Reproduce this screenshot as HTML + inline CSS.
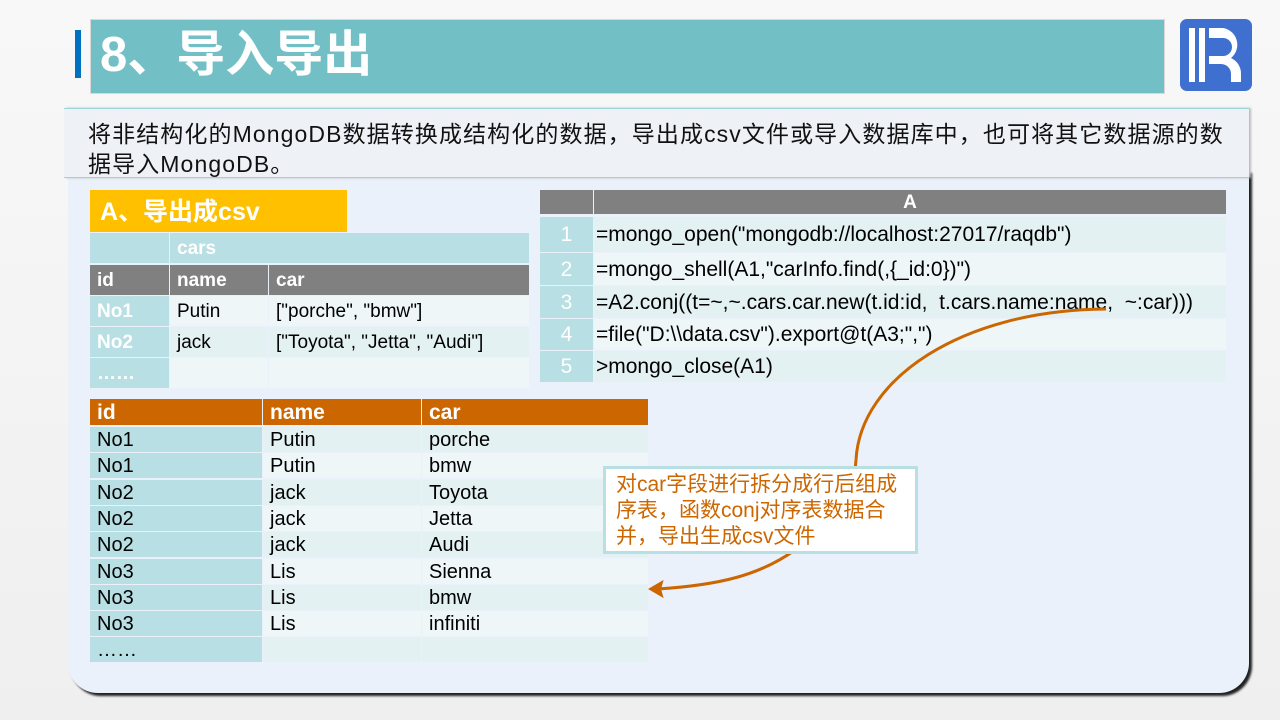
<!DOCTYPE html>
<html><head><meta charset="utf-8"><style>
*{margin:0;padding:0;box-sizing:border-box}
body{width:1280px;height:720px;overflow:hidden;background:linear-gradient(#f8f8f8,#efefef);font-family:"Liberation Sans","Noto Sans CJK SC",sans-serif;position:relative}
.a{position:absolute}
.c{position:absolute;font-size:19px;line-height:1;color:#000;padding-left:7px;display:flex;align-items:center;white-space:nowrap}
.b .c{font-size:20px}
.r .c{font-size:21px}
</style></head><body>
<div class="a" style="left:75px;top:30px;width:6px;height:48px;background:#0070c0"></div>
<div class="a" style="left:90px;top:19px;width:1075px;height:75px;background:#72bfc5;border:1px solid #d8d8d8"></div>
<div class="a" style="left:100px;top:22px;font-size:49px;font-weight:bold;color:#fff;line-height:66px;font-family:'Liberation Sans','Noto Sans CJK SC',sans-serif">8、导入导出</div>
<svg class="a" style="left:1179px;top:18px" width="74" height="74" viewBox="0 0 74 74">
<rect x="1" y="1" width="72" height="72" rx="7" fill="#3f6fcf"/>
<rect x="10" y="10" width="6" height="54" fill="#fff"/><rect x="20" y="10" width="6" height="54" fill="#fff"/>
<path d="M30 10 H44 A17 17 0 0 1 52 40 A17 17 0 0 1 62 56 V64 H52 V56 A10 10 0 0 0 42 46 H30 V38 H44 A9 9 0 0 0 44 20 H30 Z" fill="#fff"/>
</svg>
<div class="a" style="left:68px;top:170px;width:1181px;height:523px;background:#eaf1fb;border-radius:0 0 30px 30px;box-shadow:3px 3px 2px #222"></div>
<div class="a" style="left:64px;top:108px;width:1185px;height:70px;background:#eef1f5;border-top:1px solid #9fd3d8;border-bottom:1px solid #9fd3d8;box-shadow:2px 0 2px #bbb"></div>
<div class="a" style="left:88px;top:119px;font-size:23px;line-height:30px;color:#111;width:1180px;letter-spacing:1.1px;white-space:nowrap;font-family:'Liberation Sans','Noto Sans CJK SC',sans-serif">将非结构化的MongoDB数据转换成结构化的数据，导出成csv文件或导入数据库中，也可将其它数据源的数<br>据导入MongoDB。</div>

<div class="a" style="left:90px;top:190px;width:257px;height:42px;background:#ffc000;color:#fff;font-weight:bold;font-size:25px;line-height:44px;padding-left:10px">A、导出成csv</div>
<!-- left table -->
<div class="c" style="left:90px;top:233px;width:79px;height:30px;background:#b8dfe3"></div>
<div class="c" style="left:170px;top:233px;width:359px;height:30px;background:#b8dfe3;color:#fff;font-weight:bold">cars</div>
<div class="c" style="left:90px;top:265px;width:79px;height:30px;background:#808080;color:#fff;font-weight:bold">id</div>
<div class="c" style="left:170px;top:265px;width:98px;height:30px;background:#808080;color:#fff;font-weight:bold">name</div>
<div class="c" style="left:269px;top:265px;width:260px;height:30px;background:#808080;color:#fff;font-weight:bold">car</div>
<div class="c" style="left:90px;top:296px;width:79px;height:30px;background:#b8dfe3;color:#fff;font-weight:bold">No1</div>
<div class="c" style="left:170px;top:296px;width:98px;height:30px;background:#eef6f8">Putin</div>
<div class="c" style="left:269px;top:296px;width:260px;height:30px;background:#eef6f8">["porche", "bmw"]</div>
<div class="c" style="left:90px;top:327px;width:79px;height:30px;background:#b8dfe3;color:#fff;font-weight:bold">No2</div>
<div class="c" style="left:170px;top:327px;width:98px;height:30px;background:#e4f1f3">jack</div>
<div class="c" style="left:269px;top:327px;width:260px;height:30px;background:#e4f1f3">["Toyota", "Jetta", "Audi"]</div>
<div class="c" style="left:90px;top:358px;width:79px;height:30px;background:#b8dfe3;color:#fff;font-weight:bold">……</div>
<div class="c" style="left:170px;top:358px;width:98px;height:30px;background:#eef6f8"></div>
<div class="c" style="left:269px;top:358px;width:260px;height:30px;background:#eef6f8"></div>
<!-- right table -->
<div class="r">
<div class="c" style="left:540px;top:190px;width:53px;height:24px;background:#808080"></div>
<div class="c" style="left:594px;top:190px;width:632px;height:24px;background:#808080;color:#fff;font-weight:bold;justify-content:center;padding:0;font-size:19px">A</div>
<div class="c" style="left:540px;top:217px;width:53px;height:35px;background:#b8dfe3;color:#fff;justify-content:center;padding:0">1</div>
<div class="c" style="left:594px;top:217px;width:632px;height:35px;background:#e4f1f3;padding-left:2px">=mongo_open("mongodb://localhost:27017/raqdb")</div>
<div class="c" style="left:540px;top:253px;width:53px;height:32px;background:#b8dfe3;color:#fff;justify-content:center;padding:0">2</div>
<div class="c" style="left:594px;top:253px;width:632px;height:32px;background:#eef6f8;padding-left:2px">=mongo_shell(A1,"carInfo.find(,{_id:0})")</div>
<div class="c" style="left:540px;top:286px;width:53px;height:32px;background:#b8dfe3;color:#fff;justify-content:center;padding:0">3</div>
<div class="c" style="left:594px;top:286px;width:632px;height:32px;background:#e4f1f3;padding-left:2px">=A2.conj((t=~,~.cars.car.new(t.id:id,&nbsp; t.cars.name:name,&nbsp; ~:car)))</div>
<div class="c" style="left:540px;top:319px;width:53px;height:31px;background:#b8dfe3;color:#fff;justify-content:center;padding:0">4</div>
<div class="c" style="left:594px;top:319px;width:632px;height:31px;background:#eef6f8;padding-left:2px">=file("D:\\data.csv").export@t(A3;",")</div>
<div class="c" style="left:540px;top:351px;width:53px;height:31px;background:#b8dfe3;color:#fff;justify-content:center;padding:0">5</div>
<div class="c" style="left:594px;top:351px;width:632px;height:31px;background:#e4f1f3;padding-left:2px">&gt;mongo_close(A1)</div>
</div>
<!-- bottom table -->
<div class="b">
<div class="c" style="left:90px;top:399px;width:172px;height:26px;background:#cc6600;color:#fff;font-weight:bold;font-size:21px">id</div>
<div class="c" style="left:263px;top:399px;width:158px;height:26px;background:#cc6600;color:#fff;font-weight:bold;font-size:21px">name</div>
<div class="c" style="left:422px;top:399px;width:226px;height:26px;background:#cc6600;color:#fff;font-weight:bold;font-size:21px">car</div>

<div class="c" style="left:90px;top:427px;width:172px;height:25px;background:#b8dfe3">No1</div><div class="c" style="left:263px;top:427px;width:158px;height:25px;background:#e4f1f3">Putin</div><div class="c" style="left:422px;top:427px;width:226px;height:25px;background:#e4f1f3">porche</div>
<div class="c" style="left:90px;top:453px;width:172px;height:25px;background:#b8dfe3">No1</div><div class="c" style="left:263px;top:453px;width:158px;height:25px;background:#eef6f8">Putin</div><div class="c" style="left:422px;top:453px;width:226px;height:25px;background:#eef6f8">bmw</div>
<div class="c" style="left:90px;top:480px;width:172px;height:25px;background:#b8dfe3">No2</div><div class="c" style="left:263px;top:480px;width:158px;height:25px;background:#e4f1f3">jack</div><div class="c" style="left:422px;top:480px;width:226px;height:25px;background:#e4f1f3">Toyota</div>
<div class="c" style="left:90px;top:506px;width:172px;height:25px;background:#b8dfe3">No2</div><div class="c" style="left:263px;top:506px;width:158px;height:25px;background:#eef6f8">jack</div><div class="c" style="left:422px;top:506px;width:226px;height:25px;background:#eef6f8">Jetta</div>
<div class="c" style="left:90px;top:532px;width:172px;height:25px;background:#b8dfe3">No2</div><div class="c" style="left:263px;top:532px;width:158px;height:25px;background:#e4f1f3">jack</div><div class="c" style="left:422px;top:532px;width:226px;height:25px;background:#e4f1f3">Audi</div>
<div class="c" style="left:90px;top:559px;width:172px;height:25px;background:#b8dfe3">No3</div><div class="c" style="left:263px;top:559px;width:158px;height:25px;background:#eef6f8">Lis</div><div class="c" style="left:422px;top:559px;width:226px;height:25px;background:#eef6f8">Sienna</div>
<div class="c" style="left:90px;top:585px;width:172px;height:25px;background:#b8dfe3">No3</div><div class="c" style="left:263px;top:585px;width:158px;height:25px;background:#e4f1f3">Lis</div><div class="c" style="left:422px;top:585px;width:226px;height:25px;background:#e4f1f3">bmw</div>
<div class="c" style="left:90px;top:611px;width:172px;height:25px;background:#b8dfe3">No3</div><div class="c" style="left:263px;top:611px;width:158px;height:25px;background:#eef6f8">Lis</div><div class="c" style="left:422px;top:611px;width:226px;height:25px;background:#eef6f8">infiniti</div>
<div class="c" style="left:90px;top:637px;width:172px;height:25px;background:#b8dfe3">……</div><div class="c" style="left:263px;top:637px;width:158px;height:25px;background:#e4f1f3"></div><div class="c" style="left:422px;top:637px;width:226px;height:25px;background:#e4f1f3"></div>
</div>
<svg class="a" style="left:0;top:0" width="1280" height="720">
<path d="M1106 309 C960 310 860 380 856 460 L855 470" fill="none" stroke="#cc6600" stroke-width="3"/>
<path d="M795 550 C760 575 720 585 658 589" fill="none" stroke="#cc6600" stroke-width="3"/>
<path d="M650 589 L662 582 L660 589 L662 596 Z" fill="#cc6600" stroke="#cc6600" stroke-width="2"/>
</svg>
<div class="a" style="left:603px;top:466px;width:315px;height:88px;background:#fff;border:3px solid #b8dfe3;color:#cc6600;font-size:21px;line-height:26px;padding:3px 0 0 10px;white-space:nowrap;font-family:'Liberation Sans','Noto Sans CJK SC',sans-serif">对car字段进行拆分成行后组成<br>序表，函数conj对序表数据合<br>并，导出生成csv文件</div>
</body></html>
